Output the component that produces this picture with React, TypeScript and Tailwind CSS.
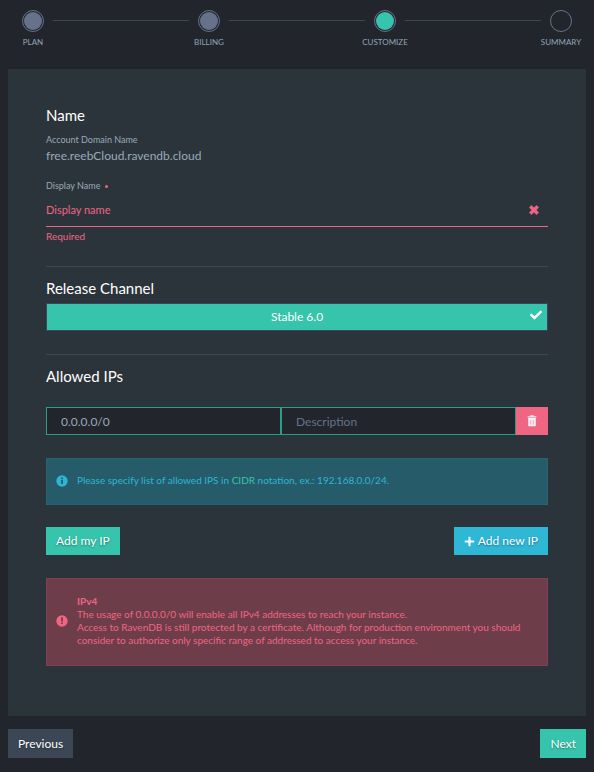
import React, { useState } from 'react';
import { FaCheck, FaPlus } from 'react-icons/fa';
import clsx from 'clsx';

type StepState = 'done' | 'active' | 'pending';

interface Step {
  label: string;
  state: StepState;
}

const STEPS: Step[] = [
  { label: 'PLAN', state: 'done' },
  { label: 'BILLING', state: 'done' },
  { label: 'CUSTOMIZE', state: 'active' },
  { label: 'SUMMARY', state: 'pending' },
];

const Stepper = () => (
  <ol className="flex items-start px-[13px] pt-[10px]">
    {STEPS.map((step, i) => (
      <React.Fragment key={step.label}>
        {i > 0 && <li aria-hidden="true" className="mt-[10px] h-px flex-1 bg-[#3c4656]" />}
        <li
          aria-current={step.state === 'active' ? 'step' : undefined}
          className="flex w-10 shrink-0 flex-col items-center"
        >
          <span className="flex size-[22px] items-center justify-center rounded-full border border-[#66728a]">
            <span
              className={clsx(
                'size-[18px] rounded-full',
                step.state === 'done' && 'bg-[#66728a]',
                step.state === 'active' && 'bg-[#37c4ac]'
              )}
            />
          </span>
          <span className="mt-1 text-[8px] leading-3 whitespace-nowrap text-[#8fa6b7]">{step.label}</span>
        </li>
      </React.Fragment>
    ))}
  </ol>
);

interface ButtonProps {
  children: React.ReactNode;
  className?: string;
}

const Button = ({ children, className }: ButtonProps) => (
  <button
    type="button"
    className={clsx(
      'flex cursor-pointer items-center gap-[3px] px-[10px] text-[12px] leading-4 text-white text-shadow-[0_1px_2px_rgba(0,0,0,0.4)]',
      className
    )}
  >
    {children}
  </button>
);

const SectionTitle = ({ children }: { children: React.ReactNode }) => (
  <h2 className="text-[15px] leading-5 text-white">{children}</h2>
);

const InfoIcon = () => (
  <svg viewBox="0 0 12 12" className="size-3 shrink-0" aria-hidden="true">
    <circle cx="6" cy="6" r="5.7" fill="#2fb5d3" />
    <path d="M5.1 5.1h1.8v4H5.1zM5.1 2.6h1.8v1.6H5.1z" fill="#265c69" />
  </svg>
);

const WarningIcon = () => (
  <svg viewBox="0 0 12 12" className="size-3 shrink-0" aria-hidden="true">
    <circle cx="6" cy="6" r="5.7" fill="#f06582" />
    <path d="M5 2.5h2l-.3 4.2H5.3zM5.2 7.5h1.6V9H5.2z" fill="#6d3d4a" />
  </svg>
);

const CrossIcon = () => (
  <svg viewBox="0 0 9 9" className="size-[10px]" aria-hidden="true">
    <path
      d="M2.2.2 4.5 2.4 6.8.2 8.8 2.2 6.6 4.5l2.2 2.3-2 2L4.5 6.6 2.2 8.8l-2-2L2.4 4.5.2 2.2z"
      fill="#f06582"
      stroke="#f06582"
      strokeWidth=".3"
      strokeLinejoin="round"
    />
  </svg>
);

const TrashIcon = () => (
  <svg viewBox="0 0 10 12" className="h-3 w-[10px]" aria-hidden="true">
    <path d="M3.4.3h3.2l.4 1h2.3v1.3H.7V1.3H3zM1.2 2.9h7.6v7.5q0 .9-.9.9H2.1q-.9 0-.9-.9z" fill="#f4eef2" />
    <path d="M3.7 5v4.600M6.300 5v4.600" stroke="#f06582" strokeWidth=".5" />
  </svg>
);

export default function App() {
  const [displayName, setDisplayName] = useState('');
  const [ip, setIp] = useState('0.0.0.0/0');
  const [description, setDescription] = useState('');

  return (
    <div className="min-h-screen bg-[#23252d] pb-[14px] font-['Lato',sans-serif] text-[#98a9b8]">
      <Stepper />

      <main className="mx-2 mt-[21px] bg-[#2c343b] px-[38px] pt-9 pb-[50px]">
        <section>
          <SectionTitle>Name</SectionTitle>
          <div className="mt-2 text-[9px] leading-[14px]">Account Domain Name</div>
          <div className="text-[12px] leading-[18px]">free.reebCloud.ravendb.cloud</div>

          <label htmlFor="display-name" className="mt-[14px] flex items-center gap-[5px] text-[9px] leading-[14px]">
            Display Name
            <span className="size-[3px] rounded-full bg-[#f06582]" />
          </label>
          <div className="flex h-[34px] items-center border-b border-[#f06582] pr-[9px]">
            <input
              id="display-name"
              type="text"
              required
              placeholder="Display name"
              value={displayName}
              onChange={(e) => setDisplayName(e.target.value)}
              className="h-full min-w-0 flex-1 bg-transparent text-[11px] text-[#f06582] outline-none placeholder:text-[#f06582]"
            />
            <CrossIcon />
          </div>
          <div className="mt-[2px] text-[10px] leading-[14px] text-[#f06582]">Required</div>
        </section>

        <hr className="mt-[23px] border-[#3c4656]" />

        <section className="mt-[11px]">
          <SectionTitle>Release Channel</SectionTitle>
          <button
            type="button"
            aria-pressed="true"
            className="relative mt-[5px] h-7 w-full cursor-pointer border border-[#3c4656] bg-[#37c4ac] text-[12px] leading-4 text-white"
          >
            Stable 6.0
            <FaCheck className="absolute top-[5px] right-[5px] size-3" />
          </button>
        </section>

        <hr className="mt-[23px] border-[#3c4656]" />

        <section className="mt-[11px]">
          <SectionTitle>Allowed IPs</SectionTitle>

          <div className="mt-[21px] flex h-7">
            <input
              type="text"
              aria-label="IP address"
              value={ip}
              onChange={(e) => setIp(e.target.value)}
              className="min-w-0 flex-1 border border-[#2d9d8b] bg-[#23252d] px-[14px] pt-[2px] text-[12px] outline-none"
            />
            <input
              type="text"
              aria-label="Description"
              placeholder="Description"
              value={description}
              onChange={(e) => setDescription(e.target.value)}
              className="min-w-0 flex-1 border border-[#2d9d8b] bg-[#23252d] px-[14px] pt-[2px] text-[12px] outline-none placeholder:text-[#66728a]"
            />
            <button
              type="button"
              aria-label="Remove"
              className="flex w-8 cursor-pointer items-center justify-center bg-[#f06582]"
            >
              <TrashIcon />
            </button>
          </div>

          <div className="mt-[23px] flex items-center gap-[9px] border border-[#29636f] bg-[#265c69] px-[9px] pt-[15px] pb-[17px] text-[#2fb5d3]">
            <InfoIcon />
            <p className="text-[10px] leading-[13px]">
              Please specify list of allowed IPS in{' '}
              <a href="#cidr" className="text-[#37c4ac]">
                CIDR
              </a>{' '}
              notation, ex.: 192.168.0.0/24.
            </p>
          </div>

          <div className="mt-[22px] flex justify-between">
            <Button className="h-7 bg-[#37c4ac]">Add my IP</Button>
            <Button className="h-7 bg-[#2fb8d6]">
              <FaPlus className="size-[11px]" />
              Add new IP
            </Button>
          </div>

          <div className="mt-[23px] flex items-center gap-[9px] border border-[#7e4052] bg-[#6d3d4a] px-[9px] pt-4 pb-[18px] text-[#f06582]">
            <WarningIcon />
            <div className="text-[10px] leading-[13px]">
              <strong className="block font-bold">IPv4</strong>
              <p>The usage of 0.0.0.0/0 will enable all IPv4 addresses to reach your instance.</p>
              <p>
                Access to RavenDB is still protected by a certificate. Although for production environment you should
                consider to authorize only specific range of addressed to access your instance.
              </p>
            </div>
          </div>
        </section>
      </main>

      <footer className="mx-2 mt-[13px] flex justify-between">
        <Button className="h-[29px] bg-[#3b4754]">Previous</Button>
        <Button className="h-[29px] bg-[#37c4ac]">Next</Button>
      </footer>
    </div>
  );
}
